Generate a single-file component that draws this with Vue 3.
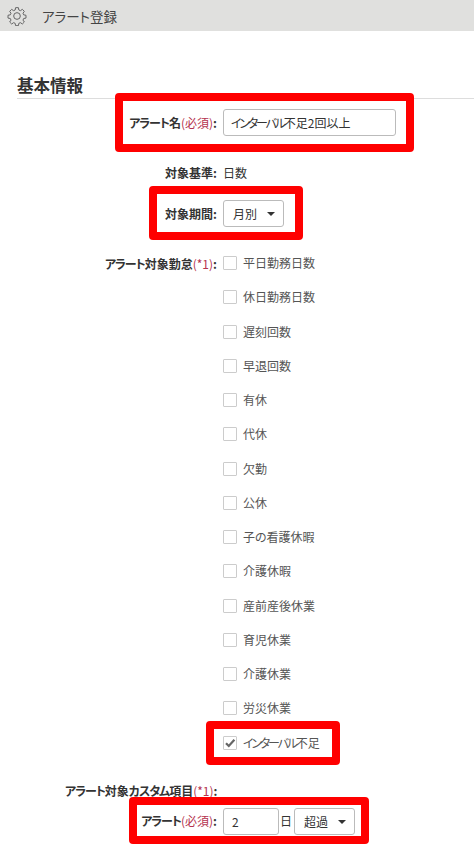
<script setup>
const items = [
  { label: '平日勤務日数', checked: false },
  { label: '休日勤務日数', checked: false },
  { label: '遅刻回数', checked: false },
  { label: '早退回数', checked: false },
  { label: '有休', checked: false },
  { label: '代休', checked: false },
  { label: '欠勤', checked: false },
  { label: '公休', checked: false },
  { label: '子の看護休暇', checked: false },
  { label: '介護休暇', checked: false },
  { label: '産前産後休業', checked: false },
  { label: '育児休業', checked: false },
  { label: '介護休業', checked: false },
  { label: '労災休業', checked: false },
]
</script>

<template>
  <div class="page">
    <header class="title-bar">
      <svg class="gear" width="20" height="20" viewBox="0 0 24 24" fill="none" stroke="#666" stroke-width="1.2" stroke-linejoin="round">
        <path d="M10.3 2h3.4l.5 2.8 1.9.8 2.3-1.6 2.4 2.4-1.6 2.3.8 1.9 2.8.5v3.4l-2.8.5-.8 1.9 1.6 2.3-2.4 2.4-2.3-1.6-1.9.8-.5 2.8h-3.4l-.5-2.8-1.9-.8-2.3 1.6-2.4-2.4 1.6-2.3-.8-1.9-2.8-.5v-3.4l2.8-.5.8-1.9-1.6-2.3 2.4-2.4 2.3 1.6 1.9-.8z" />
        <circle cx="12" cy="12" r="4" />
      </svg>
      <span>アラート登録</span>
    </header>

    <h2 class="section-title">基本情報</h2>

    <div class="form">
      <div class="row row-name">
        <label class="label"><span class="kana">アラート</span>名<em>(必須)</em>:</label>
        <div class="text-input name-input"><span class="kana-tight">インターバル</span>不足2回以上</div>
      </div>

      <div class="row row-basis">
        <label class="label">対象基準:</label>
        <span>日数</span>
      </div>

      <div class="row row-period">
        <label class="label">対象期間:</label>
        <div class="select period-select">月別<i class="caret"></i></div>
      </div>

      <div class="row row-items">
        <label class="label"><span class="kana">アラート</span>対象勤怠<em>(*1)</em>:</label>
        <ul class="check-list">
          <li v-for="item in items" :key="item.label" class="check-item">
            <span class="checkbox"></span>
            {{ item.label }}
          </li>
          <li class="check-item">
            <span class="checkbox">
              <svg width="12" height="12" viewBox="0 0 12 12">
                <path d="M2 6.2l2.8 2.8L10.4 2.8" fill="none" stroke="#666" stroke-width="2.2" />
              </svg>
            </span>
            <span><span class="kana-tight">インターバル</span>不足</span>
          </li>
        </ul>
      </div>

      <div class="custom-title"><span class="kana">アラート</span>対象<span class="kana">カスタム</span>項目<em>(*1)</em>:</div>

      <div class="row row-custom">
        <label class="label"><span class="kana">アラート</span><em>(必須)</em>:</label>
        <div class="custom-fields">
          <div class="text-input days-input">2</div>
          <span>日</span>
          <div class="select over-select">超過<i class="caret"></i></div>
        </div>
      </div>
    </div>

    <!-- 注釈の赤枠 -->
    <div class="mark mark-name"></div>
    <div class="mark mark-period"></div>
    <div class="mark mark-check"></div>
    <div class="mark mark-custom"></div>
  </div>
</template>

<style scoped>
.page {
  position: relative;
  width: 474px;
  height: 851px;
  overflow: hidden;
  background: #fff;
  color: #333;
  font-family: "Noto Sans CJK JP", "Noto Sans", sans-serif;
  font-size: 12px;
  line-height: 18px;
  font-feature-settings: "palt";
}

.kana {
  letter-spacing: -1px;
}

.kana-tight {
  letter-spacing: -2.2px;
}

.title-bar {
  display: flex;
  align-items: center;
  gap: 15px;
  height: 31px;
  padding-left: 7px;
  background: #e0e0de;
  color: #444;
  font-size: 13.5px;
}

.section-title {
  margin: 42px 0 0 17px;
  padding-bottom: 1px;
  height: 24px;
  border-bottom: 1px solid #ddd;
  font-size: 16.5px;
  line-height: 24px;
  font-weight: 700;
  color: #333;
}

.form {
  padding-top: 10px;
}

.row {
  display: grid;
  grid-template-columns: 217px 1fr;
  column-gap: 6px;
  align-items: center;
}

.label {
  text-align: right;
  font-weight: 700;
}

em {
  font-style: normal;
  font-weight: 400;
  color: #b5334f;
}

.text-input,
.select {
  box-sizing: border-box;
  height: 27px;
  border: 1px solid #bbb;
  border-radius: 3px;
  background: #fff;
  line-height: 25px;
}

.text-input {
  padding-left: 7px;
}

.name-input {
  width: 173px;
}

.row-basis {
  margin-top: 28px;
}

.row-period {
  margin-top: 18px;
}

.select {
  position: relative;
  padding-left: 9px;
}

.period-select,
.over-select {
  width: 61px;
}

.caret {
  position: absolute;
  right: 8px;
  top: 11px;
  border-left: 4px solid transparent;
  border-right: 4px solid transparent;
  border-top: 4px solid #333;
}

.row-items {
  align-items: start;
  margin-top: 27px;
}

.row-items .label {
  margin-top: 1px;
}

.check-list {
  margin: 0;
  padding: 0;
  list-style: none;
}

.check-item {
  display: flex;
  align-items: center;
  gap: 6px;
  height: 18px;
  margin-bottom: 16.25px;
  color: #555;
}

.checkbox {
  box-sizing: border-box;
  display: flex;
  align-items: center;
  justify-content: center;
  width: 14px;
  height: 14px;
  border: 1px solid #ccc;
  border-radius: 1px;
}

.custom-title {
  margin-top: 14px;
  padding-left: 65px;
  font-weight: 700;
}

.row-custom {
  margin-top: 8px;
}

.custom-fields {
  display: flex;
  align-items: center;
  gap: 1px;
}

.days-input {
  width: 56px;
  padding-left: 8px;
}

.over-select {
  margin-left: 1px;
}

.mark {
  position: absolute;
  box-sizing: border-box;
  border: 8px solid #f00;
  border-radius: 4px;
}

.mark-name {
  left: 115px;
  top: 93px;
  width: 299px;
  height: 59px;
}

.mark-period {
  left: 149px;
  top: 186px;
  width: 154px;
  height: 54px;
}

.mark-check {
  left: 206px;
  top: 721px;
  width: 134px;
  height: 44px;
}

.mark-custom {
  left: 129px;
  top: 797px;
  width: 240px;
  height: 47px;
}
</style>
